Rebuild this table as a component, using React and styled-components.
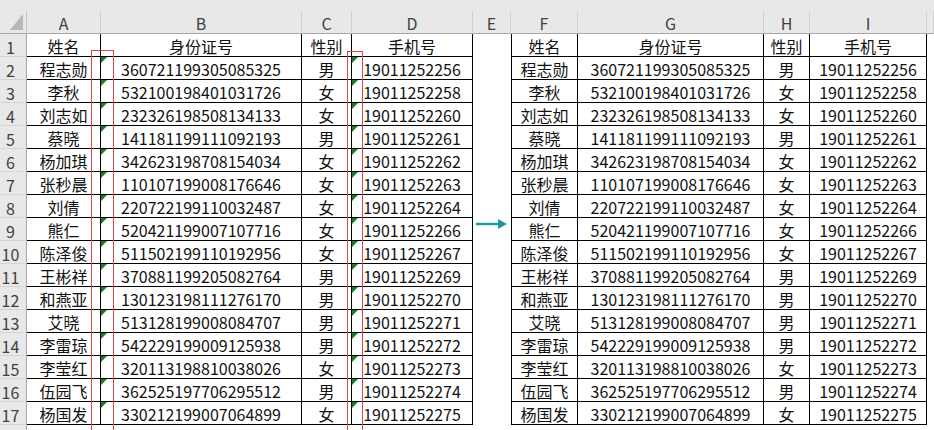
import React from 'react'
import styled, { createGlobalStyle, css } from 'styled-components'

const GlobalStyle = createGlobalStyle`
  html, body { margin: 0; padding: 0; background: #fff; }
  body { font-family: "Noto Sans CJK SC", "Noto Sans", sans-serif; }
`

const rows = [
  ['程志勋', '360721199305085325', '男', '19011252256'],
  ['李秋', '532100198401031726', '女', '19011252258'],
  ['刘志如', '232326198508134133', '女', '19011252260'],
  ['蔡晓', '141181199111092193', '男', '19011252261'],
  ['杨加琪', '342623198708154034', '女', '19011252262'],
  ['张秒晨', '110107199008176646', '女', '19011252263'],
  ['刘倩', '220722199110032487', '女', '19011252264'],
  ['熊仁', '520421199007107716', '女', '19011252266'],
  ['陈泽俊', '511502199110192956', '女', '19011252267'],
  ['王彬祥', '370881199205082764', '男', '19011252269'],
  ['和燕亚', '130123198111276170', '男', '19011252270'],
  ['艾晓', '513128199008084707', '男', '19011252271'],
  ['李雷琼', '542229199009125938', '男', '19011252272'],
  ['李莹红', '320113198810038026', '女', '19011252273'],
  ['伍园飞', '362525197706295512', '男', '19011252274'],
  ['杨国发', '330212199007064899', '女', '19011252275'],
]
const titles = ['姓名', '身份证号', '性别', '手机号']
const letters = ['A', 'B', 'C', 'D', 'E', 'F', 'G', 'H', 'I', '']

const Sheet = styled.div`
  position: relative;
  width: 934px;
  height: 430px;
  overflow: hidden;
  display: grid;
  grid-template-columns: 27px 74px 201px 50px 121px 38px 67px 186px 46px 117px 1fr;
  grid-template-rows: 11px 23px repeat(18, 23px);
`

const TopBand = styled.div`
  grid-column: 1 / -1;
  background: #e8e8e8;
`

const Corner = styled.div`
  position: relative;
  background: #e8e8e8;
  border-right: 1px solid #c4c4c4;
  border-bottom: 1px solid #a8a8a8;
  &::after {
    content: '';
    position: absolute;
    right: 3px;
    bottom: 3px;
    border-bottom: 16px solid #b8b8b8;
    border-left: 13px solid transparent;
  }
`

const ColHead = styled.div`
  display: flex;
  align-items: center;
  justify-content: center;
  padding-top: 2px;
  box-sizing: border-box;
  background: #e8e8e8;
  border-right: 1px solid #d0d0d0;
  border-bottom: 1px solid #a8a8a8;
  font-size: 16px;
  color: #404040;
`

const RowHead = styled.div`
  display: flex;
  align-items: center;
  justify-content: center;
  padding: 3px 5px 0 0;
  box-sizing: border-box;
  background: #e8e8e8;
  border-right: 1px solid #a8a8a8;
  border-bottom: 1px solid #d4d4d4;
  font-size: 16px;
  color: #404040;
`

const Cell = styled.div`
  position: relative;
  display: flex;
  align-items: center;
  justify-content: center;
  padding-top: 2px;
  box-sizing: border-box;
  font-size: 16px;
  color: #111;
  white-space: nowrap;
  overflow: hidden;
  ${p => p.$boxed && css`
    border-right: 1px solid #000;
    border-bottom: 1px solid #000;
  `}
  ${p => p.$leftEdge && css`border-left: 1px solid #000;`}
  ${p => p.$flag && css`
    &::before {
      content: '';
      position: absolute;
      left: 0;
      top: 0;
      border-top: 6px solid #1d7a2a;
      border-right: 6px solid transparent;
    }
  `}
`

const Gap = styled.div`
  display: flex;
  align-items: flex-start;
  padding-left: 3px;
  background: #fff;
`

const RedBox = styled.div`
  position: absolute;
  z-index: 2;
  top: ${p => p.$top}px;
  left: ${p => p.$left}px;
  width: ${p => p.$width}px;
  height: 400px;
  box-sizing: border-box;
  border: 1px solid #d94848;
  pointer-events: none;
`

function Arrow() {
  return (
    <svg width="32" height="12" viewBox="0 0 32 12">
      <line x1="0" y1="6" x2="24" y2="6" stroke="#1f9a9a" strokeWidth="2.4" />
      <polygon points="22,1 31,6 22,11" fill="#1f9a9a" />
    </svg>
  )
}

function DataCells({ cells, flags }) {
  return cells.map((txt, i) => (
    <Cell key={i} $boxed $leftEdge={flags.left && i === 0} $flag={flags.flag && (i === 1 || i === 3)}>
      {txt}
    </Cell>
  ))
}

export default function App() {
  const body = [titles, ...rows]
  return (
    <Sheet>
      <GlobalStyle />
      <TopBand />
      <Corner />
      {letters.map((l, i) => <ColHead key={i}>{l}</ColHead>)}
      {body.map((r, idx) => (
        <React.Fragment key={idx}>
          <RowHead>{idx + 1}</RowHead>
          <DataCells cells={r} flags={{ left: false, flag: idx > 0 }} />
          <Gap>{idx === 8 && <Arrow />}</Gap>
          <DataCells cells={r} flags={{ left: true, flag: false }} />
          <Gap />
        </React.Fragment>
      ))}
      <RowHead />
      <RedBox $left={91} $top={50} $width={23} />
      <RedBox $left={347} $top={51} $width={16} />
    </Sheet>
  )
}
